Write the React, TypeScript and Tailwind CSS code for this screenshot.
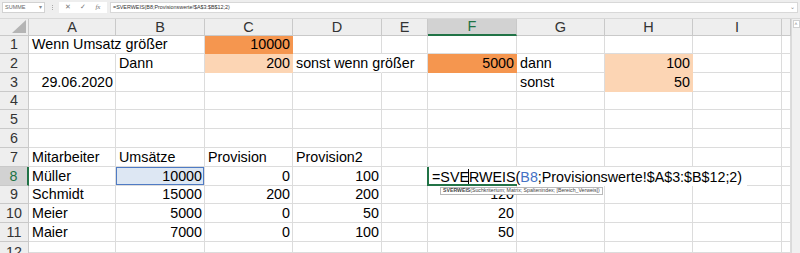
import React from "react";

type Cell = { v: string; r?: boolean; bg?: "o" | "l"; over?: boolean; sel?: boolean };

const COLS = ["A", "B", "C", "D", "E", "F", "G", "H", "I", "J"];
const ROWS = [1, 2, 3, 4, 5, 6, 7, 8, 9, 10, 11, 12];

const data: Record<string, Cell> = {
  A1: { v: "Wenn Umsatz größer", over: true },
  C1: { v: "10000", r: true, bg: "o" },
  B2: { v: "Dann" },
  C2: { v: "200", r: true, bg: "l" },
  D2: { v: "sonst wenn größer", over: true },
  F2: { v: "5000", r: true, bg: "o" },
  G2: { v: "dann" },
  H2: { v: "100", r: true, bg: "l" },
  A3: { v: "29.06.2020", r: true },
  G3: { v: "sonst" },
  H3: { v: "50", r: true, bg: "l" },
  A7: { v: "Mitarbeiter" },
  B7: { v: "Umsätze" },
  C7: { v: "Provision" },
  D7: { v: "Provision2" },
  A8: { v: "Müller" },
  B8: { v: "10000", r: true, sel: true },
  C8: { v: "0", r: true },
  D8: { v: "100", r: true },
  A9: { v: "Schmidt" },
  B9: { v: "15000", r: true },
  C9: { v: "200", r: true },
  D9: { v: "200", r: true },
  F9: { v: "120", r: true },
  A10: { v: "Meier" },
  B10: { v: "5000", r: true },
  C10: { v: "0", r: true },
  D10: { v: "50", r: true },
  F10: { v: "20", r: true },
  A11: { v: "Maier" },
  B11: { v: "7000", r: true },
  C11: { v: "0", r: true },
  D11: { v: "100", r: true },
  F11: { v: "50", r: true },
};

function GridCell({ id }: { id: string }) {
  const c = data[id];
  let cls =
    "relative flex items-end pb-[1px] whitespace-nowrap overflow-visible border-r border-b border-[#dcdcdc] leading-[16px] text-black";
  if (c?.bg === "o") cls += " bg-[#f5964f] border-r-[#f5964f] border-b-[#f5964f]";
  else if (c?.bg === "l") cls += " bg-[#fcd5b4] border-r-[#fcd5b4] border-b-[#fcd5b4]";
  if (c?.over) cls += " border-r-transparent";
  if (c?.sel) cls += " bg-[#dde7f3] shadow-[inset_0_0_0_1px_#4f7bc4]";
  cls += c?.r ? " justify-end pr-[2px]" : " justify-start pl-[3px]";
  return <div className={cls}>{c ? <span className="relative z-10">{c.v}</span> : null}</div>;
}

export default function App() {
  return (
    <div className="w-[800px] h-[253px] overflow-hidden bg-white font-['Liberation_Sans',Arial,sans-serif] text-[14.3px]">
      {/* formula bar */}
      <div className="h-[19px] bg-[#eeeeee] flex items-start pt-[2px] pl-[2px] gap-[3px] border-b border-[#d8d8d8]">
        <div className="w-[43px] h-[11px] bg-white border border-[#d2d2d2] flex items-center justify-between px-[2px] text-[5.5px] text-[#666]">
          <span>SUMME</span>
          <span className="text-[6px] text-[#888]">▾</span>
        </div>
        <div className="w-[8px] h-[11px] flex flex-col items-center justify-center gap-[1px]">
          <span className="w-[1px] h-[1px] bg-[#aaa]" />
          <span className="w-[1px] h-[1px] bg-[#aaa]" />
          <span className="w-[1px] h-[1px] bg-[#aaa]" />
        </div>
        <div className="w-[48px] h-[11px] bg-white flex items-center justify-around px-[2px] text-[7px] text-[#777]">
          <span>✕</span>
          <span>✓</span>
          <span className="italic font-['Liberation_Serif',serif] text-[7px]">fx</span>
        </div>
        <div className="flex-1 h-[11px] bg-white border border-[#d8d8d8] flex items-center justify-between pl-[2px] pr-[2px] mr-[2px] text-[5.4px] text-[#333]">
          <span>=SVERWEIS(B8;Provisionswerte!$A$3:$B$12;2)</span>
          <span className="text-[6px] text-[#888]">⌄</span>
        </div>
      </div>
      <div className="flex h-[234px]">
        <div className="relative w-[791px] grid grid-cols-[29px_87px_89px_88px_89px_46px_89px_88px_88px_89px_9px] grid-rows-[17px_18px_19px_19px_18px_19px_19px_19px_19px_18px_19px_19px_11px]">
          {/* corner */}
          <div className="bg-[#eeeeee] border-r border-b border-[#c9c9c9] flex items-end justify-end pr-[2px] pb-[2px]">
            <svg width="14" height="13" viewBox="0 0 14 13">
              <polygon points="14,0 14,13 0,13" fill="#b4b4b4" />
            </svg>
          </div>
          {COLS.map((k) =>
            k === "F" ? (
              <div
                key={k}
                className="bg-[#d2d2d2] border-r border-[#c9c9c9] border-b-2 border-b-[#217346] flex items-center justify-center text-[#217346] text-[14.5px] leading-none"
              >
                {k}
              </div>
            ) : (
              <div
                key={k}
                className="bg-[#eeeeee] border-r border-b border-[#c9c9c9] flex items-center justify-center text-[#333] text-[14.5px] leading-none"
              >
                {k === "J" ? "" : k}
              </div>
            )
          )}
          {ROWS.map((r) => (
            <React.Fragment key={r}>
              {r === 8 ? (
                <div className="bg-[#d2d2d2] border-b border-[#c9c9c9] border-r-2 border-r-[#217346] flex items-end justify-center pb-[1px] text-[#217346] leading-[16px]">
                  {r}
                </div>
              ) : r === 12 ? (
                <div className="bg-[#eeeeee] border-r border-[#c9c9c9] flex items-start justify-center pt-[2px] text-[#333] leading-[16px] overflow-hidden">
                  {r}
                </div>
              ) : (
                <div className="bg-[#eeeeee] border-r border-b border-[#c9c9c9] flex items-end justify-center pb-[1px] text-[#333] leading-[16px]">
                  {r}
                </div>
              )}
              {COLS.map((k) => (
                <GridCell key={k + r} id={k + r} />
              ))}
            </React.Fragment>
          ))}

          {/* in-cell edit box for F8 */}
          <div className="absolute left-[427px] top-[148px] h-[19px] w-[320px] bg-white z-20 flex items-end pb-[1px] pl-[3px] leading-[16px] whitespace-nowrap border-l-2 border-[#217346]">
            <span className="relative">
              =SVE
              <span className="absolute right-0 top-0 w-[1px] h-[16px] bg-black" />
            </span>
            <span>RWEIS(</span>
            <span className="text-[#4472c4]">B8</span>
            <span>;Provisionswerte!$A$3:$B$12;2)</span>
          </div>
          <div className="absolute left-[427px] top-[165px] h-[2px] w-[90px] bg-[#217346] z-30" />

          {/* function tooltip */}
          <div className="absolute left-[440px] top-[168px] h-[8px] bg-white border border-[#b9b9b9] z-30 flex items-center px-[2px] text-[5.2px] leading-none text-[#444] whitespace-nowrap">
            <span className="font-bold">SVERWEIS</span>
            <span>(Suchkriterium; Matrix; Spaltenindex; [Bereich_Verweis])</span>
          </div>
        </div>
        {/* vertical scrollbar */}
        <div className="w-[9px] bg-[#f0f0f0] border-l border-[#dadada] flex flex-col items-center">
          <div className="w-[7px] h-[8px] mt-[1px] bg-white border border-[#d0d0d0] flex items-center justify-center text-[5px] text-[#777] leading-none">
            ˄
          </div>
        </div>
      </div>
    </div>
  );
}
